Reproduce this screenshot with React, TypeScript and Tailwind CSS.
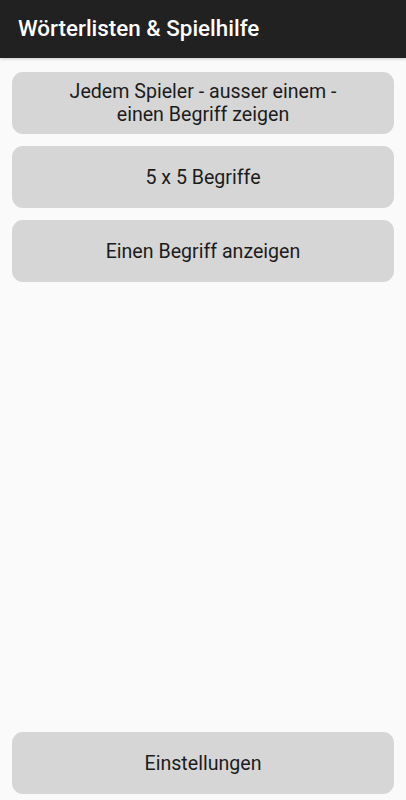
import React from 'react'

const font = { fontFamily: 'Roboto, "Noto Sans", sans-serif' }

function MenuButton({ children }: { children: React.ReactNode }) {
  return (
    <button className="w-full h-[62px] rounded-[11px] bg-[#d6d6d6] text-[#1c1c1c] text-[19.6px] leading-[23px] flex items-center justify-center text-center px-4">
      {children}
    </button>
  )
}

export default function App() {
  return (
    <div className="h-[800px] bg-[#fafafa] flex flex-col" style={font}>
      {/* ── Toolbar ── */}
      <div className="h-[58px] bg-[#212121] flex items-center px-[18px] shadow-[0_1px_3px_rgba(0,0,0,0.2)]">
        <h1 className="text-white text-[22.4px] font-medium">Wörterlisten &amp; Spielhilfe</h1>
      </div>

      {/* ── Menu ── */}
      <div className="flex-1 flex flex-col px-3 pt-[14px] pb-[6px]">
        <div className="flex flex-col gap-[12px]">
          <MenuButton>
            <span>
              Jedem Spieler - ausser einem -<br />
              einen Begriff zeigen
            </span>
          </MenuButton>
          <MenuButton>5 x 5 Begriffe</MenuButton>
          <MenuButton>Einen Begriff anzeigen</MenuButton>
        </div>
        <div className="mt-auto">
          <MenuButton>Einstellungen</MenuButton>
        </div>
      </div>
    </div>
  )
}
